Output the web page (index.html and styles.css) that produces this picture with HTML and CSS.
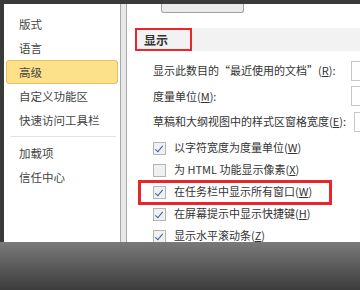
FILE: index.html
```html
<!DOCTYPE html>
<html lang="zh">
<head>
    <meta charset="UTF-8">
    <title>Word 选项 - 高级</title>
    <link rel="stylesheet" href="styles.css">
</head>
<body>
    <div class="window">
        <div class="sidebar">
            <div class="nav-item">版式</div>
            <div class="nav-item">语言</div>
            <div class="nav-item active">高级</div>
            <div class="nav-item">自定义功能区</div>
            <div class="nav-item">快速访问工具栏</div>
            <div class="nav-sep"></div>
            <div class="nav-item">加载项</div>
            <div class="nav-item">信任中心</div>
        </div>
        <div class="divider"></div>
        <div class="content">
            <div class="top-btn"></div>
            <div class="section-head">
                <span class="section-title">显示</span>
            </div>
            <div class="rows">
                <div class="row">
                    <span>显示此数目的“最近使用的文档”(<u>R</u>):</span>
                    <span class="field"></span>
                </div>
                <div class="row">
                    <span>度量单位(<u>M</u>):</span>
                    <span class="field"></span>
                </div>
                <div class="row">
                    <span>草稿和大纲视图中的样式区窗格宽度(<u>E</u>):</span>
                    <span class="field"></span>
                </div>
            </div>
            <div class="checks">
                <div class="check"><span class="box on"></span>以字符宽度为度量单位(<u>W</u>)</div>
                <div class="check"><span class="box"></span>为 HTML 功能显示像素(<u>X</u>)</div>
                <div class="check marked"><span class="box on"></span>在任务栏中显示所有窗口(<u>W</u>)</div>
                <div class="check"><span class="box on"></span>在屏幕提示中显示快捷键(<u>H</u>)</div>
                <div class="check"><span class="box on"></span>显示水平滚动条(<u>Z</u>)</div>
            </div>
        </div>
    </div>
    <div class="bottom-band"></div>
</body>
</html>
```

FILE: styles.css
```css
body {
    margin: 0;
    width: 360px;
    height: 290px;
    overflow: hidden;
    background-color: #3a3a3a;
    font-family: "Noto Sans CJK SC", "Liberation Sans", sans-serif;
    font-size: 11px;
    line-height: 1.2;
    color: #333;
    white-space: nowrap;
}
.window {
    display: flex;
    height: 242px;
    margin-left: 4px;
    padding-top: 4px;
    box-sizing: border-box;
    background-color: #3a3a3a;
}
.sidebar {
    width: 116px;
    background-color: #fff;
    padding-top: 8px;
    box-sizing: border-box;
    font-size: 11.5px;
}
.nav-item {
    height: 24px;
    line-height: 24px;
    padding-left: 13px;
    margin: 0 2px;
    color: #444;
}
.nav-item.active {
    background-color: #fde08a;
    border: 1px solid #e8c15a;
    border-radius: 3px;
    height: 22px;
    line-height: 22px;
    padding-left: 12px;
}
.nav-sep {
    height: 1px;
    background-color: #e2e2e2;
    margin: 4px 4px 4px 6px;
}
.divider {
    width: 7px;
    background-color: #e8e8e8;
    border-left: 1px solid #a8a8a8;
    border-right: 1px solid #a8a8a8;
    box-sizing: border-box;
}
.content {
    flex: 1;
    min-width: 0;
    background-color: #fff;
    padding-left: 8px;
    overflow: hidden;
}
.top-btn {
    width: 81px;
    height: 8px;
    margin-left: 26px;
    border: 1px solid #a0a0a0;
    border-top: none;
    border-radius: 0 0 3px 3px;
    background-color: #ebebeb;
}
.section-head {
    margin-top: 15px;
    height: 23px;
    background-color: #f2f2f2;
}
.section-title {
    display: inline-block;
    height: 23px;
    width: 57px;
    line-height: 20px;
    padding-left: 7px;
    box-sizing: border-box;
    border: 2px solid #e8262b;
    font-weight: bold;
    font-size: 12px;
    color: #333;
}
.rows {
    margin-top: 7px;
}
.row {
    display: flex;
    justify-content: space-between;
    align-items: center;
    height: 25.5px;
    padding-left: 18px;
}
.field {
    flex-shrink: 0;
    width: 8px;
    height: 18px;
    margin-left: 8px;
    border: 1px solid #c8c8c8;
    border-right: none;
    background-color: #fff;
}
.checks {
    margin-top: 2.5px;
}
.check {
    display: flex;
    align-items: center;
    height: 22px;
    padding-left: 18px;
}
.check.marked {
    height: 25px;
    margin: -1.5px 28px -1.5px 3px;
    padding-left: 15px;
    outline: 3px solid #e8262b;
    outline-offset: -3px;
}
.box {
    width: 11px;
    height: 11px;
    margin-right: 8px;
    border: 1px solid #b4b4b4;
    background-color: #f0f0f0;
    position: relative;
}
.box.on::after {
    content: "";
    position: absolute;
    left: 3px;
    top: 1px;
    width: 3px;
    height: 7px;
    border-right: 1.5px solid #3c5aa0;
    border-bottom: 1.5px solid #3c5aa0;
    transform: rotate(40deg);
}
.bottom-band {
    height: 48px;
    background: linear-gradient(#7a7a7a, #3c3c3c);
}
```
